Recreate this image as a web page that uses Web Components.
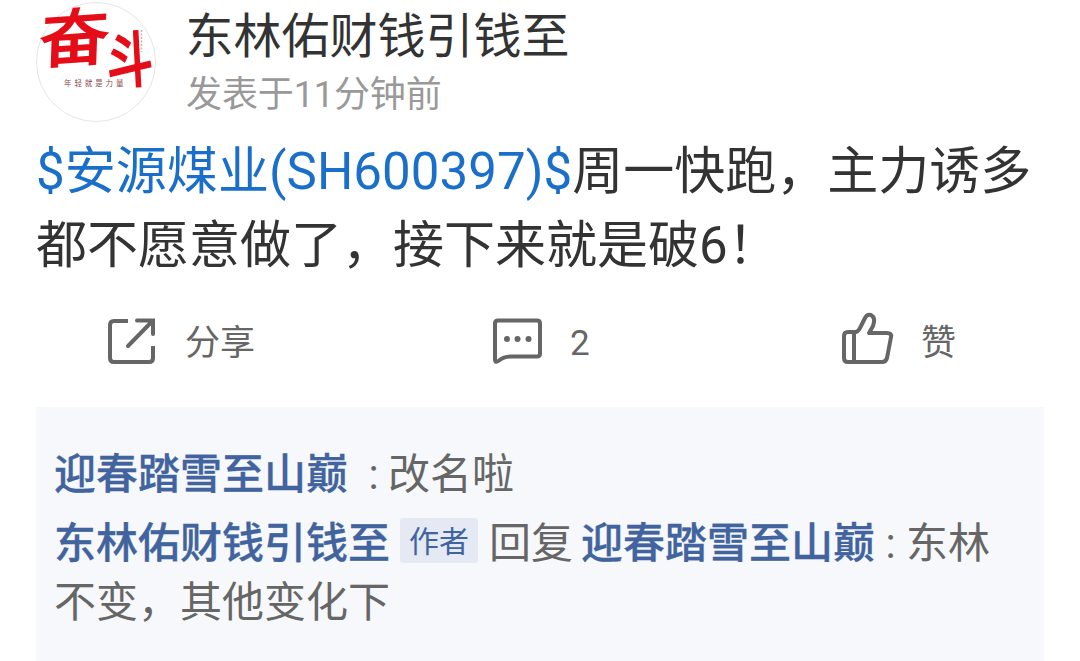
<!DOCTYPE html>
<html lang="zh-CN">
<head>
<meta charset="utf-8">
<title>动态</title>
<style>
body{margin:0;background:#fff;overflow:hidden;font-family:Roboto,"Noto Sans CJK SC",sans-serif}
</style>
</head>
<body>
<post-card></post-card>
<script>
function define(name, html){
  customElements.define(name, class extends HTMLElement{
    constructor(){ super(); this.attachShadow({mode:'open'}).innerHTML = html; }
  });
}

define('user-avatar', `<style>:host{display:block;width:120px;height:120px;flex:none}svg{display:block;overflow:visible}</style>
<svg width="120" height="120" viewBox="0 0 120 120">
  <circle cx="60" cy="60" r="59.5" fill="#fff" stroke="#e6e6e6"/>
  <g fill="#e50d18" stroke="#e50d18" font-family="'Noto Sans CJK SC',sans-serif">
    <text transform="translate(3 61) rotate(-4) skewX(-6) scale(1.2 1.06)" font-size="58" font-weight="400" stroke-width="2">奋</text>
    <text transform="translate(72 81) rotate(-3) scale(.88 1.15)" font-size="52" font-weight="400" stroke-width="2.200">斗</text>
  </g>
  <text x="28" y="84" font-family="'Noto Sans CJK SC',sans-serif" font-size="7.5" letter-spacing="2.900" fill="#8c4a4a">年轻就是力量</text>
  <path d="M105.500 28V50" stroke="#ccb4b4" stroke-width="1.500" stroke-dasharray="2 1.500"/>
</svg>`);

define('post-header', `<style>
:host{display:flex;gap:30px;padding:2px 36px 0;height:120px}
.meta{display:flex;flex-direction:column}
.name{font-size:48px;line-height:56px;color:#333;padding-top:7px;margin-left:-.5px}
.time{font-size:36px;line-height:44px;color:#999;padding-top:8px;letter-spacing:-.1px}
</style>
<user-avatar></user-avatar>
<div class="meta"><div class="name"><slot name="name"></slot></div><div class="time"><slot name="time"></slot></div></div>`);

define('post-text', `<style>
:host{display:block;padding:13px 36px 0;font-size:51px;line-height:74px;color:#333;white-space:nowrap}
::slotted(b){font-weight:400;color:#1a6fcb;letter-spacing:.07px}
</style><slot></slot>`);

define('action-item', `<style>
:host{display:flex;align-items:center;height:60px;font-size:35px;line-height:60px;color:#666;white-space:nowrap}
::slotted(svg){display:block;flex:none;margin-right:27px}
span{padding-top:6px}
</style><slot name="icon"></slot><span><slot></slot></span>`);

define('action-bar', `<style>
:host{display:grid;grid-template-columns:385px 349px auto;padding:28px 0 0 106px;height:96px}
</style><slot></slot>`);

define('author-badge', `<style>
:host{display:inline-block;vertical-align:middle;box-sizing:border-box;width:78px;height:45px;margin:-12px 11px 0 10px;border-radius:3px;background:#e4e9f3;color:#41649f;font-size:30px;line-height:47px;text-align:center}
</style><slot></slot>`);

define('user-name', `<style>:host{display:inline;color:#41649f;font-weight:500;-webkit-text-stroke:.3px #41649f}</style><slot></slot>`);

define('comment-line', `<style>
:host{display:block;font-size:42px;line-height:59px;color:#666;white-space:nowrap}
</style><slot></slot>`);

define('comment-list', `<style>
:host{display:flex;flex-direction:column;gap:10px;box-sizing:border-box;margin:0 36px;height:254px;padding:38px 18px 0;background:#f6f8fb}
</style><slot></slot>`);

define('colon-mark', `<style>:host{display:inline-block;text-align:center;width:var(--w,31px)}</style>:`);

define('post-card', `<style>:host{display:block;width:1080px;height:661px;overflow:hidden}</style>
<post-header><span slot="name">东林佑财钱引钱至</span><span slot="time">发表于11分钟前</span></post-header>
<post-text><b>$安源煤业(SH600397)$</b>周一快跑，主力诱多<br>都不愿意做了，接下来就是破6！</post-text>
<action-bar>
  <action-item><svg slot="icon" width="52" height="52" viewBox="0 1 52 52" fill="none" stroke="#666" stroke-width="4"><path d="M22 7H8Q4 7 4 11V44Q4 48 8 48H43Q47 48 47 44V32"/><path d="M31 6.500H47V20M46 7.500L22 32" stroke-linecap="round"/></svg>分享</action-item>
  <action-item><svg slot="icon" width="52" height="52" viewBox="0 1.500 52 52" fill="none" stroke="#666" stroke-width="4" stroke-linejoin="round"><path d="M7 7H46Q49 7 49 10V40Q49 43 46 43H20Q13 43 8 47Q4 50 4 46V10Q4 7 7 7Z"/><g fill="#666" stroke="none"><circle cx="16" cy="25.500" r="3"/><circle cx="26.500" cy="25.500" r="3"/><circle cx="37.500" cy="25.500" r="3"/></g></svg>2</action-item>
  <action-item><svg slot="icon" width="54" height="54" viewBox="0 3 54 54" fill="none" stroke="#666" stroke-width="4" stroke-linejoin="round" style="overflow:visible"><path d="M8 21H16Q19 20 21 15L25 7Q27 3 31 4Q36 7 33 15L29 22H47Q52 22 51 26L47 47Q46 51 42 51H8Q4 51 4 47V25Q4 21 8 21ZM14 21V51"/></svg>赞</action-item>
</action-bar>
<comment-list>
  <comment-line><user-name>迎春踏雪至山巅</user-name><colon-mark style="--w:51px;margin-right:-11px"></colon-mark>改名啦</comment-line>
  <comment-line><user-name>东林佑财钱引钱至</user-name><author-badge>作者</author-badge>回复<user-name style="margin-left:8px">迎春踏雪至山巅</user-name><colon-mark></colon-mark>东林<br>不变，其他变化下</comment-line>
</comment-list>`);
</script>
</body>
</html>
